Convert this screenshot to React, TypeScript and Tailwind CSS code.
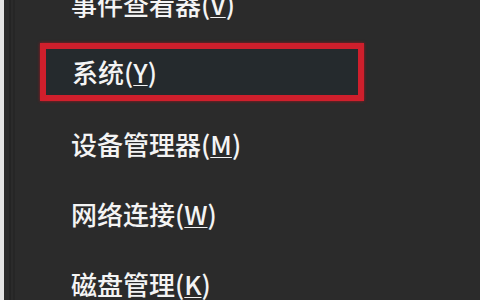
const items = [
  { label: "事件查看器", key: "V" },
  { label: "系统", key: "Y", active: true },
  { label: "设备管理器", key: "M" },
  { label: "网络连接", key: "W" },
  { label: "磁盘管理", key: "K" },
]

function ItemText({ label, hotkey }: { label: string; hotkey: string }) {
  return (
    <span className="whitespace-nowrap text-[26px] leading-none font-medium text-[#f4f4f4]">
      {label}(<span className="underline decoration-1 underline-offset-2">{hotkey}</span>)
    </span>
  )
}

export default function App() {
  return (
    <div
      className="flex h-[300px] w-[480px] overflow-hidden bg-[#2b2b2b]"
      style={{ fontFamily: '"Noto Sans CJK SC", "Noto Sans", sans-serif' }}
    >
      <div className="w-[4px] shrink-0 bg-[#e4e4e4]" />
      <div className="ml-[5px] w-[2px] shrink-0 bg-[#242424]" />
      <div className="ml-[2px] w-[2px] shrink-0 bg-[#262626]" />
      <div className="-mt-[31px] flex flex-1 flex-col">
        {items.map((item) =>
          item.active ? (
            <div key={item.key} className="flex h-[70px] shrink-0 items-center">
              <div className="-mt-[4px] ml-[25px] flex h-[58px] w-[324px] items-center border-[6px] border-[#cf1f2c] bg-[#252a2d] pl-[26px] shadow-[0_0_3px_#a0151f]">
                <ItemText label={item.label} hotkey={item.key} />
              </div>
            </div>
          ) : (
            <div key={item.key} className="flex h-[70px] shrink-0 items-center pl-[56px]">
              <ItemText label={item.label} hotkey={item.key} />
            </div>
          ),
        )}
      </div>
    </div>
  )
}
